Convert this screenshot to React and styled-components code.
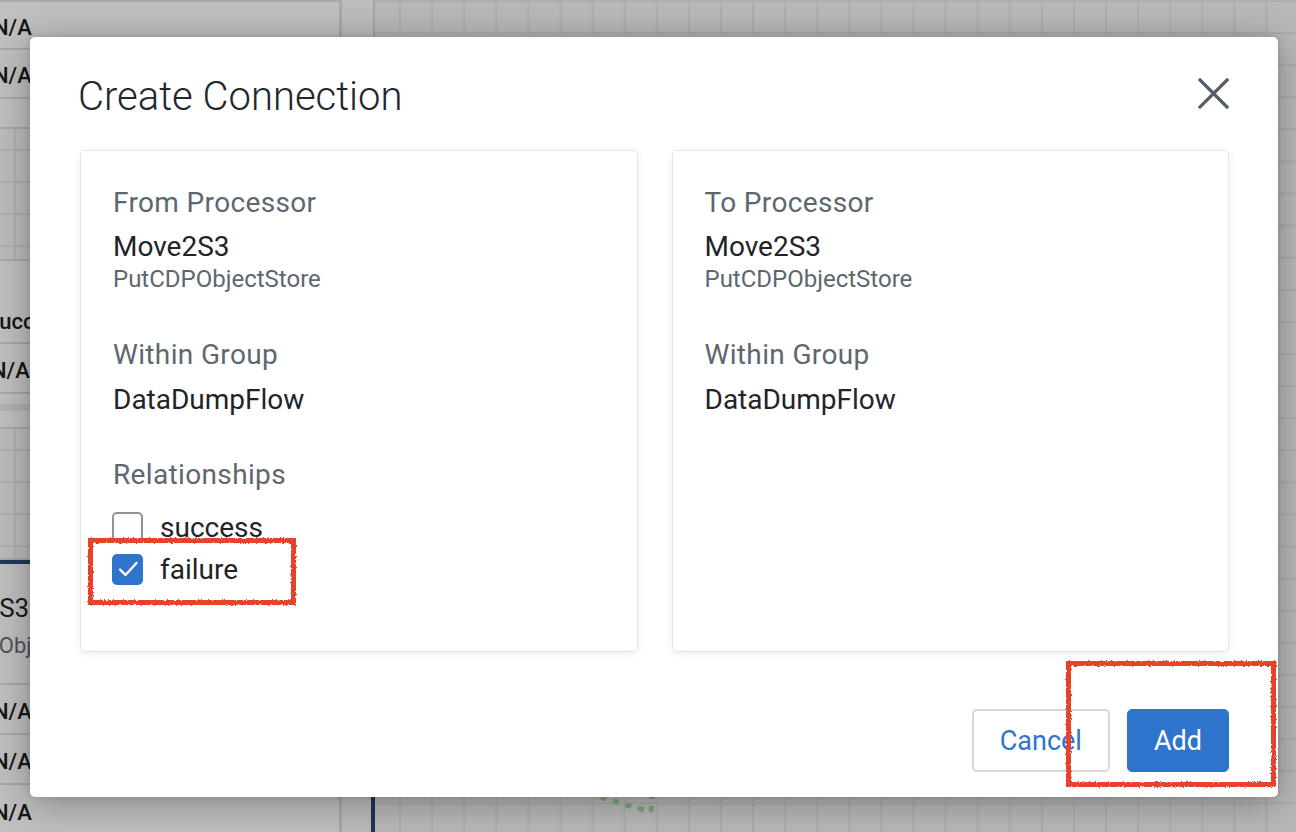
import React from 'react';
import styled, { createGlobalStyle } from 'styled-components';

const Global = createGlobalStyle`
  html, body { margin: 0; padding: 0; }
  body { font-family: Roboto, "Noto Sans", sans-serif; overflow: hidden; }
  * { box-sizing: border-box; }
`;

const Page = styled.div`
  position: relative;
  width: 1296px;
  height: 832px;
  display: flex;
  overflow: hidden;
  background: #b8b9b8;
`;

const SidePanel = styled.div`
  width: 342px;
  flex: none;
  display: flex;
  flex-direction: column;
  background: #c0c0c0;
  border-right: 3px solid #a9a9a9;
  border-top: 2px solid #a9a9a9;
  overflow: hidden;
`;

const PanelRow = styled.div`
  height: ${(p) => p.$h}px;
  flex: none;
  display: flex;
  flex-direction: column;
  justify-content: center;
  padding-top: ${(p) => p.$pt || 0}px;
  border-bottom: ${(p) => (p.$line ? '2px solid #a9a9a9' : 'none')};
  background: ${(p) => p.$bg || 'transparent'};
  font-size: 22px;
  font-weight: 500;
  color: #161616;
  white-space: nowrap;
  text-indent: ${(p) => p.$indent || 0}px;
`;

const PanelTitle = styled.div`
  font-size: 26px;
  font-weight: 400;
  color: #1a1a1a;
  line-height: 34px;
  text-indent: ${(p) => p.$indent || 0}px;
`;

const PanelSub = styled.div`
  font-size: 22px;
  font-weight: 400;
  color: #4f5357;
  line-height: 30px;
  margin-top: 6px;
  text-indent: ${(p) => p.$indent || 0}px;
`;

const GridBlock = styled.div`
  height: ${(p) => p.$h}px;
  flex: none;
  border-bottom: 2px solid #a9a9a9;
  background-color: #bcbdbc;
  background-image: linear-gradient(to right, #afb0af 2px, transparent 2px),
    linear-gradient(to bottom, #afb0af 2px, transparent 2px);
  background-size: 32.1px 32.1px;
  background-position: 14px 20px;
`;

const NavyBar = styled.div`
  height: 4px;
  flex: none;
  background: #1f3a5c;
`;

const Strip = styled.div`
  width: 33px;
  flex: none;
  display: flex;
  flex-direction: column;
  background: #bdbdbd;
`;

const StripEdge = styled.div`
  flex: ${(p) => (p.$grow ? 1 : 'none')};
  height: ${(p) => (p.$h ? `${p.$h}px` : 'auto')};
  border-right: ${(p) => (p.$navy ? '4px solid #1d3659' : '2px solid #a6a7a6')};
`;

const Canvas = styled.div`
  position: relative;
  flex: 1;
  background-color: #b8b9b8;
  background-image: linear-gradient(to right, #adaead 2px, transparent 2px),
    linear-gradient(to bottom, #adaead 2px, transparent 2px);
  background-size: 32.1px 32.1px;
  background-position: 24px 0;
`;

const Connector = styled.svg`
  position: absolute;
  left: 176px;
  top: 772px;
`;

const Dialog = styled.div`
  position: absolute;
  left: 30px;
  top: 37px;
  width: 1248px;
  height: 760px;
  background: #fff;
  border-radius: 5px;
  box-shadow: 0 6px 40px rgba(0, 0, 0, 0.32), 0 0 6px rgba(0, 0, 0, 0.12);
  padding: 36px 49px 25px 50px;
  display: flex;
  flex-direction: column;
`;

const Header = styled.div`
  display: flex;
  justify-content: space-between;
  align-items: flex-start;
  height: 48px;
  margin-bottom: 29px;
`;

const Title = styled.h1`
  margin: 0 0 0 -2px;
  font-size: 40px;
  line-height: 48px;
  font-weight: 300;
  color: #22272b;
`;

const CloseButton = styled.button`
  width: 31px;
  height: 31px;
  margin-top: 5px;
  padding: 0;
  border: none;
  background: none;
  display: flex;
  cursor: pointer;
`;

const Cards = styled.div`
  display: flex;
  gap: 34px;
  height: 502px;
`;

const Card = styled.div`
  flex: 1;
  border: 1px solid #e6e6e6;
  border-radius: 5px;
  box-shadow: 0 2px 10px rgba(0, 0, 0, 0.07);
  padding: 34px 32px;
  display: flex;
  flex-direction: column;
`;

const Label = styled.div`
  font-size: 28px;
  letter-spacing: 0.35px;
  line-height: 36px;
  color: #5d6770;
  margin-top: ${(p) => p.$mt || 0}px;
`;

const Value = styled.div`
  font-size: 28px;
  line-height: 36px;
  color: #1f2428;
  margin-top: ${(p) => p.$mt || 0}px;
`;

const Sub = styled.div`
  font-size: 24px;
  line-height: 28px;
  color: #5d6770;
`;

const CheckList = styled.div`
  margin-top: 13px;
  display: flex;
  flex-direction: column;
`;

const CheckRow = styled.label`
  height: 42px;
  display: flex;
  align-items: center;
  gap: 17px;
  font-size: 28px;
  color: #1f2428;
  cursor: pointer;
`;

const Box = styled.span`
  width: 31px;
  height: 31px;
  flex: none;
  border-radius: 5px;
  margin-left: -1px;
  display: flex;
  align-items: center;
  justify-content: center;
  background: ${(p) => (p.$checked ? '#2f74cc' : '#fff')};
  border: 2px solid ${(p) => (p.$checked ? '#2f74cc' : '#8c939a')};
`;

const Footer = styled.div`
  margin-top: auto;
  display: flex;
  justify-content: flex-end;
  gap: 17px;
`;

const Button = styled.button`
  height: 63px;
  padding: 0 26px;
  font-family: Roboto, "Noto Sans", sans-serif;
  font-size: 27px;
  border-radius: 5px;
  cursor: pointer;
  border: ${(p) => (p.$primary ? '1px solid #2f74cc' : '2px solid #d6d8dc')};
  background: ${(p) => (p.$primary ? '#2f74cc' : '#fff')};
  color: ${(p) => (p.$primary ? '#fff' : '#2f74cc')};
`;

const Annotation = styled.div`
  position: absolute;
  left: ${(p) => p.$x}px;
  top: ${(p) => p.$y}px;
  width: ${(p) => p.$w}px;
  height: ${(p) => p.$h}px;
  border: 5px solid #e8432b;
  pointer-events: none;
  filter: url(#rough);
`;

const Defs = styled.svg`
  position: absolute;
  width: 0;
  height: 0;
`;

function CheckItem({ label, checked }) {
  return (
    <CheckRow>
      <Box $checked={checked}>
        {checked && (
          <svg width="22" height="22" viewBox="0 0 22 22">
            <polyline points="3,11.5 8.5,17 19.5,5" fill="none" stroke="#fff" strokeWidth="2.4" strokeLinecap="round" strokeLinejoin="round" />
          </svg>
        )}
      </Box>
      {label}
    </CheckRow>
  );
}

function ProcessorCard({ heading, name, type, group, children }) {
  return (
    <Card>
      <Label>{heading}</Label>
      <Value $mt={8}>{name}</Value>
      <Sub>{type}</Sub>
      <Label $mt={44}>Within Group</Label>
      <Value $mt={9}>{group}</Value>
      {children}
    </Card>
  );
}

export default function App() {
  return (
    <>
      <Global />
      <Page>
        <Defs aria-hidden="true">
          <filter id="rough">
            <feTurbulence type="fractalNoise" baseFrequency="0.6" numOctaves="2" seed="3" />
            <feDisplacementMap in="SourceGraphic" scale="3" />
          </filter>
        </Defs>
        <SidePanel>
          <PanelRow $h={48} $pt={4} $line $indent={-7}>N/A</PanelRow>
          <PanelRow $h={49} $pt={4} $line $indent={-7}>N/A</PanelRow>
          <PanelRow $h={30} $line />
          <GridBlock $h={132} />
          <PanelRow $h={35} />
          <PanelRow $h={48} $pt={4} $line $indent={-12}>success</PanelRow>
          <PanelRow $h={50} $pt={4} $line $indent={-9}>N/A</PanelRow>
          <PanelRow $h={10} />
          <PanelRow $h={7} $bg="#b2b2b2" />
          <PanelRow $h={18} $line />
          <GridBlock $h={131} />
          <NavyBar />
          <PanelRow $h={121} $pt={4} $line>
            <PanelTitle $indent={-79}>Move2S3</PanelTitle>
            <PanelSub $indent={-77}>PutCDPObjectStore</PanelSub>
          </PanelRow>
          <PanelRow $h={50} $pt={4} $line $indent={-7}>N/A</PanelRow>
          <PanelRow $h={50} $pt={4} $line $indent={-7}>N/A</PanelRow>
          <PanelRow $h={50} $pt={4} $indent={-7}>N/A</PanelRow>
        </SidePanel>
        <Strip>
          <StripEdge $grow />
          <StripEdge $navy $h={60} />
        </Strip>
        <Canvas>
          <Connector width="140" height="60" viewBox="0 0 140 60">
            <path d="M0 10 Q 45 24 100 40" fill="none" stroke="#79aa79" strokeWidth="5" strokeDasharray="6 7" />
            <path d="M100 40 L 102 18" fill="none" stroke="#79aa79" strokeWidth="5" strokeDasharray="6 7" />
          </Connector>
        </Canvas>

        <Dialog role="dialog" aria-label="Create Connection">
          <Header>
            <Title>Create Connection</Title>
            <CloseButton aria-label="Close">
              <svg width="31" height="31" viewBox="0 0 31 31">
                <path d="M2 2 L29 29 M29 2 L2 29" stroke="#555d65" strokeWidth="3.2" strokeLinecap="square" />
              </svg>
            </CloseButton>
          </Header>
          <Cards>
            <ProcessorCard heading="From Processor" name="Move2S3" type="PutCDPObjectStore" group="DataDumpFlow">
              <Label $mt={39}>Relationships</Label>
              <CheckList>
                <CheckItem label="success" />
                <CheckItem label="failure" checked />
              </CheckList>
            </ProcessorCard>
            <ProcessorCard heading="To Processor" name="Move2S3" type="PutCDPObjectStore" group="DataDumpFlow" />
          </Cards>
          <Footer>
            <Button>Cancel</Button>
            <Button $primary>Add</Button>
          </Footer>
        </Dialog>

        <Annotation $x={88} $y={538} $w={208} $h={67} />
        <Annotation $x={1066} $y={661} $w={210} $h={126} />
      </Page>
    </>
  );
}
